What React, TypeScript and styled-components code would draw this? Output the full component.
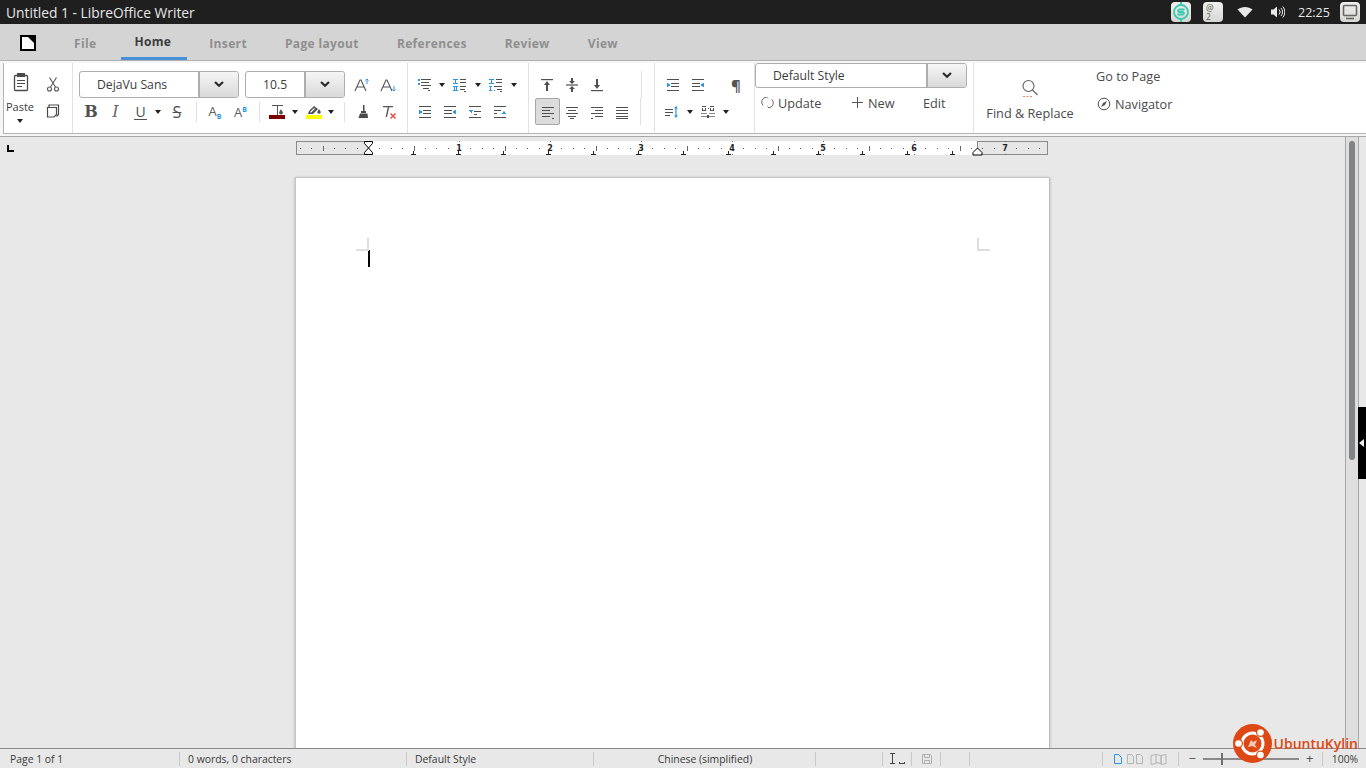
import React from 'react';
import styled, { createGlobalStyle } from 'styled-components';

const GlobalStyle = createGlobalStyle`
  html, body, #root {
    margin: 0;
    padding: 0;
    height: 100%;
    overflow: hidden;
  }
  body {
    font-family: "Open Sans", "Noto Sans", "Liberation Sans", sans-serif;
  }
`;

const Window = styled.div`
  width: 1366px;
  height: 768px;
  display: flex;
  flex-direction: column;
  position: relative;
  overflow: hidden;
  background: #e8e8e8;
`;

/* top panel */
const TitleBar = styled.div`
  height: 24px;
  flex: none;
  background: #1f1f1f;
  display: flex;
  align-items: center;
  padding: 0 6px;
`;

const TitleText = styled.div`
  flex: 1;
  color: #e6e6e6;
  font-size: 13.8px;
`;

const Tile = styled.div<{ $ml: number }>`
  width: 20px;
  height: 20px;
  margin-left: ${(p) => p.$ml}px;
  border-radius: 4px;
  background: linear-gradient(#f0f0ee, #d6d6d2);
  display: flex;
  align-items: center;
  justify-content: center;
`;

const TrayIcon = styled.div<{ $ml: number }>`
  margin-left: ${(p) => p.$ml}px;
  display: flex;
  align-items: center;
`;

const Clock = styled.div`
  color: #e8e8e8;
  font-size: 12.5px;
  width: 31px;
  margin-left: 13px;
`;

/* tabs */
const TabBar = styled.div`
  height: 36px;
  flex: none;
  background: #d4d4d4;
  display: flex;
  align-items: stretch;
  padding-left: 20px;
  box-sizing: border-box;
`;

const LogoSlot = styled.div`
  width: 35px;
  display: flex;
  align-items: center;
  padding-top: 2px;
`;

const Tab = styled.div<{ $active?: boolean }>`
  position: relative;
  padding: 0 19px;
  display: flex;
  align-items: center;
  padding-top: ${(p) => (p.$active ? 0 : 2)}px;
  padding-bottom: ${(p) => (p.$active ? 1 : 0)}px;
  font-size: 12px;
  font-weight: 700;
  letter-spacing: 0.35px;
  color: ${(p) => (p.$active ? '#3c3c3c' : '#8f8f8f')};

  ${(p) =>
    p.$active &&
    `&::after {
      content: '';
      position: absolute;
      left: 6px;
      right: 3px;
      bottom: 0;
      height: 3px;
      background: #4a90d9;
    }`}
`;

/* ribbon */
const RibbonFrame = styled.div`
  height: 77px;
  flex: none;
  box-sizing: border-box;
  background: #f6f6f6;
  border-top: 1px solid #b2b2b2;
  border-bottom: 1px solid #a8a8a8;
  padding: 2px 0 2px 3px;
`;

const Ribbon = styled.div`
  height: 71px;
  box-sizing: border-box;
  background: #fff;
  border-left: 1px solid #b4b4b4;
  border-bottom: 1px solid #b4b4b4;
  display: flex;
`;

const Group = styled.div<{ $w: number; $pad?: number; $flush?: boolean }>`
  width: ${(p) => p.$w}px;
  flex: none;
  box-sizing: border-box;
  padding-top: ${(p) => (p.$flush ? 0 : 8)}px;
  padding-left: ${(p) => p.$pad ?? 0}px;
  border-right: 1px solid #e2e2e2;
`;

const Row = styled.div`
  height: 27px;
  display: flex;
  align-items: center;
`;

const Tool = styled.div<{ $w: number; $active?: boolean; $lift?: number }>`
  width: ${(p) => p.$w}px;
  height: 27px;
  flex: none;
  display: flex;
  align-items: center;
  justify-content: center;
  box-sizing: border-box;
  border-radius: 2px;
  padding-bottom: ${(p) => p.$lift ?? 0}px;
  ${(p) => p.$active && 'background: #dcdcdc; border: 1px solid #a6a6a6;'}
`;

const Sep = styled.div<{ $w: number; $tall?: boolean }>`
  width: ${(p) => p.$w}px;
  height: ${(p) => (p.$tall ? 27 : 20)}px;
  flex: none;
  display: flex;
  justify-content: center;

  &::before {
    content: '';
    width: 1px;
    background: #e0e0e0;
  }
`;

const Caret = styled.span`
  width: 0;
  height: 0;
  border-left: 3.5px solid transparent;
  border-right: 3.5px solid transparent;
  border-top: 4px solid #222;
`;

const ClipGroup = styled(Group)`
  display: grid;
  grid-template-columns: 34px 30px;
  grid-template-rows: 27px 40px;
`;

const PasteLabel = styled.div`
  display: flex;
  flex-direction: column;
  align-items: center;
  gap: 5px;
  padding-top: 1px;
  font-size: 11px;
  color: #3c3c3c;
  margin-left: -2px;
`;

const ComboWrap = styled.div<{ $w: number; $text: number; $indent: number; $h?: number }>`
  width: ${(p) => p.$w}px;
  height: ${(p) => p.$h ?? 27}px;
  flex: none;
  box-sizing: border-box;
  border: 1px solid #aeaeae;
  border-radius: 3px;
  display: grid;
  grid-template-columns: ${(p) => p.$text}px 1fr;
  font-size: 12.2px;
  color: #3c3c3c;
  background: #fff;
  overflow: hidden;

  span:first-child {
    padding-left: ${(p) => p.$indent}px;
    display: flex;
    align-items: center;
  }
`;

const ComboButton = styled.div`
  background: linear-gradient(#f6f6f6, #d9d9d9);
  border-left: 2px solid #aeaeae;
  display: flex;
  align-items: center;
  justify-content: center;
`;

const ActionRow = styled.div`
  height: 29px;
  display: flex;
  align-items: center;
  font-size: 12.7px;
  color: #4a4a4a;
  padding-left: 6px;
`;

const Action = styled.div<{ $w: number }>`
  width: ${(p) => p.$w}px;
  flex: none;
  display: flex;
  align-items: center;
  gap: 4px;
`;

const FindGroup = styled.div`
  display: flex;
  font-size: 12.7px;
  color: #4a4a4a;
`;

const FindButton = styled.div`
  width: 112px;
  display: flex;
  flex-direction: column;
  align-items: center;
  padding-top: 16px;
  gap: 6px;
  margin-right: 10px;
`;

const NavColumn = styled.div`
  display: flex;
  flex-direction: column;
  padding-top: 4px;
  gap: 11px;
`;

const NavItem = styled.div`
  height: 17px;
  display: flex;
  align-items: center;
  gap: 4px;
`;

const NavIconSlot = styled.div`
  padding-left: 1px;
  display: flex;
`;

/* workspace */
const Workspace = styled.div`
  flex: 1;
  min-height: 0;
  display: flex;
  overflow: hidden;
`;

const DocArea = styled.div`
  width: 1345px;
  flex: none;
  overflow: hidden;
`;

const RulerRow = styled.div`
  height: 40px;
  padding-top: 4px;
  box-sizing: border-box;
  display: flex;
  padding-left: 7px;
`;

const CornerSlot = styled.div`
  width: 289px;
  display: flex;
  align-items: flex-start;
  padding-top: 4px;
`;

const Page = styled.div`
  width: 755px;
  height: 700px;
  margin-left: 295px;
  box-sizing: border-box;
  background: #fff;
  border: 1px solid #c6c6c6;
  border-right-color: #bdbdbd;
  box-shadow: -1px 0 2px #c8c8c8, 1px 1px 2px #cfcfcf;
  padding: 60px 59px 0 60px;
`;

const MarksRow = styled.div`
  display: flex;
  justify-content: space-between;
`;

const CropMark = styled.div<{ $side: 'left' | 'right' }>`
  width: 13px;
  height: 13px;
  box-sizing: border-box;
  border-bottom: 2px solid #dfdfdf;
  ${(p) => `border-${p.$side === 'left' ? 'right' : 'left'}: 2px solid #dfdfdf;`}
`;

const Cursor = styled.div`
  width: 2px;
  height: 17px;
  margin-left: 12px;
  margin-top: -1px;
  background: #000;
`;

const ScrollTrack = styled.div`
  width: 13px;
  flex: none;
  box-sizing: border-box;
  background: #dedede;
  border-left: 1px solid #a8a8a8;
  padding: 4px 3px 0 3px;
`;

const ScrollThumb = styled.div`
  width: 6px;
  height: 319px;
  border-radius: 3px;
  background: #7f8585;
`;

const SideEdge = styled.div`
  flex: 1;
  box-sizing: border-box;
  border-left: 1px solid #a8a8a8;
  display: flex;
  align-items: center;
`;

const SideHandle = styled.div`
  width: 8px;
  height: 72px;
  margin-left: -1px;
  flex: none;
  background: #000;
  display: flex;
  align-items: center;
  padding-left: 1px;
  box-sizing: border-box;

  &::before {
    content: '';
    border-top: 4px solid transparent;
    border-bottom: 4px solid transparent;
    border-right: 5px solid #eee;
  }
`;

/* status bar */
const StatusBar = styled.div`
  height: 20px;
  flex: none;
  box-sizing: border-box;
  border-top: 1px solid #8a8a8a;
  background: #e8e8e8;
  display: flex;
  font-size: 10.4px;
  color: #3a3a3a;
`;

const Cell = styled.div<{ $w: number; $center?: boolean; $pad?: number; $last?: boolean }>`
  width: ${(p) => p.$w}px;
  flex: none;
  box-sizing: border-box;
  display: flex;
  align-items: center;
  justify-content: ${(p) => (p.$center ? 'center' : 'flex-start')};
  padding-left: ${(p) => p.$pad ?? 0}px;
  position: relative;

  ${(p) =>
    !p.$last &&
    `&::after {
      content: '';
      position: absolute;
      right: 0;
      top: 3px;
      bottom: 2px;
      width: 1px;
      background: #c8c8c8;
    }`}
`;

const ZoomTrack = styled.div`
  width: 96px;
  height: 2px;
  margin: 0 7px;
  background: #8a8a8a;
  position: relative;

  &::before {
    content: '';
    position: absolute;
    left: 18px;
    top: -5px;
    width: 2px;
    height: 12px;
    background: #707070;
  }
`;

const ZoomSign = styled.span`
  font-size: 13px;
  color: #555;
  line-height: 1;
`;

const Brand = styled.div`
  position: absolute;
  right: 8px;
  bottom: 5px;
  display: flex;
  align-items: center;
  gap: 2px;
  color: #dd4814;
  font-size: 14px;
  font-weight: 600;
`;

const Pilcrow = styled.span`
  font-size: 15px;
  font-weight: 700;
  color: #555;
`;

const GRAY = '#505050';
const BLUE = '#2a96e8';

type Bar = [number, number, number, number, string?];

// small toolbar icons built from solid strips
const Bars = ({ d, w = 16, h = 16 }: { d: Bar[]; w?: number; h?: number }) => (
  <svg width={w} height={h} viewBox={`0 0 ${w} ${h}`}>
    {d.map(([x, y, bw, bh, c], i) => (
      <rect key={i} x={x} y={y} width={bw} height={bh} fill={c ?? GRAY} />
    ))}
  </svg>
);

const ListBullet = () => (
  <Bars d={[[2, 2, 2, 2, BLUE], [5, 2, 10, 1], [5, 5, 8, 1], [2, 6, 2, 2, BLUE], [5, 8, 10, 1], [7, 11, 6, 1], [12, 13, 2, 1]]} />
);
const ListNumber = () => (
  <Bars d={[[1, 2, 5, 1, BLUE], [3, 3, 1, 3, BLUE], [1, 6, 5, 1, BLUE], [8, 2, 6, 1], [8, 5, 6, 1], [1, 9, 5, 1, BLUE], [2, 10, 1, 3, BLUE], [4, 10, 1, 3, BLUE], [1, 13, 5, 1, BLUE], [8, 9, 6, 1], [8, 12, 5, 1], [12, 14, 2, 1]]} />
);
const ListOutline = () => (
  <Bars d={[[1, 2, 5, 1, BLUE], [3, 3, 1, 3, BLUE], [1, 6, 5, 1, BLUE], [8, 2, 6, 1], [8, 5, 6, 1], [1, 9, 3, 1, BLUE], [2, 10, 1, 3, BLUE], [1, 13, 3, 1, BLUE], [6, 13, 1, 1, BLUE], [6, 9, 8, 1], [9, 12, 5, 1], [12, 14, 2, 1]]} />
);
const IndentLeft = () => (
  <Bars d={[[2, 2, 12, 1], [6, 6, 8, 1], [6, 9, 8, 1], [2, 13, 12, 1], [2, 6, 1, 4, BLUE], [3, 6.5, 1, 3, BLUE], [4, 7, 1, 2, BLUE]]} />
);
const IndentRight = () => (
  <Bars d={[[2, 2, 12, 1], [2, 6, 8, 1], [2, 9, 8, 1], [2, 13, 12, 1], [13, 6, 1, 4, BLUE], [12, 6.5, 1, 3, BLUE], [11, 7, 1, 2, BLUE]]} />
);
const SpaceDown = () => (
  <Bars d={[[2, 2, 12, 1], [2, 6, 4, 1, BLUE], [3, 7, 2, 1, BLUE], [4, 8, 1, 1, BLUE], [7, 7, 7, 1], [7, 10, 3, 1], [2, 13, 12, 1]]} />
);
const SpaceUp = () => (
  <Bars d={[[2, 2, 12, 1], [2, 6, 7, 1], [2, 9, 3, 1], [10, 9, 4, 1, BLUE], [11, 8, 2, 1, BLUE], [11.5, 7, 1, 1, BLUE], [2, 13, 12, 1]]} />
);
const AlignTop = () => (
  <svg width="16" height="16" viewBox="0 0 16 16" fill={GRAY}>
    <rect x="2" y="2" width="12" height="1.2" />
    <path d="M8 4l3 4H9v6H7V8H5z" />
  </svg>
);
const AlignMiddle = () => (
  <svg width="16" height="16" viewBox="0 0 16 16" fill={GRAY}>
    <rect x="2" y="7.4" width="12" height="1.2" />
    <path d="M7 1h2v3h2L8 7 5 4h2zM8 9l3 3H9v3H7v-3H5z" />
  </svg>
);
const AlignBottom = () => (
  <svg width="16" height="16" viewBox="0 0 16 16" fill={GRAY}>
    <rect x="2" y="13" width="12" height="1.2" />
    <path d="M7 2h2v6h2l-3 4-3-4h2z" />
  </svg>
);
const TextLeft = () => (
  <Bars d={[[2, 3, 12, 1], [2, 6, 8, 1], [2, 9, 12, 1], [2, 12, 8, 1], [12, 14, 2, 1]]} />
);
const TextCenter = () => (
  <Bars d={[[2, 3, 12, 1], [4, 6, 8, 1], [2, 9, 12, 1], [4, 12, 8, 1], [6, 14, 4, 1]]} />
);
const TextRight = () => (
  <Bars d={[[2, 3, 12, 1], [6, 6, 8, 1], [2, 9, 12, 1], [6, 12, 8, 1], [2, 14, 2, 1]]} />
);
const TextJustify = () => (
  <Bars d={[[2, 3, 12, 1], [2, 6, 12, 1], [2, 9, 12, 1], [2, 12, 12, 1], [2, 14, 12, 1]]} />
);
const LineSpacing = () => (
  <svg width="16" height="16" viewBox="0 0 16 16" fill={GRAY}>
    <path d="M1 5h8v1H1zM1 8h8v1H1zM1 11h5v1H1z" />
    <path d="M12 2l2 2.500h-1.400v7H14l-2 2.500-2-2.500h1.400v-7H10z" fill={BLUE} />
  </svg>
);
const ColumnsIcon = () => (
  <Bars d={[[2, 2, 4, 1], [2, 4, 1, 2], [5, 4, 1, 2], [2, 6, 4, 1], [8, 4, 1, 1], [10, 2, 4, 1], [10, 4, 1, 2], [13, 4, 1, 2], [10, 6, 4, 1], [1, 9, 6, 1, '#888'], [9, 9, 6, 1, '#888'], [1, 12, 6, 1, '#888'], [9, 12, 6, 1, '#888'], [7, 11, 1, 3], [8, 11, 1, 3]]} />
);
const PasteIcon = () => (
  <svg width="18" height="20" viewBox="0 0 18 20" fill="none" stroke="#4a4a4a">
    <rect x="2.500" y="3.500" width="13" height="15" rx="1" strokeWidth="1.300" />
    <rect x="5" y="1" width="8" height="4" fill="#4a4a4a" stroke="none" />
    <path d="M5 8.500h8M5 11.500h8M5 14.500h5" />
  </svg>
);
const CutIcon = () => (
  <svg width="14" height="16" viewBox="0 0 14 16" fill="none" stroke="#555" strokeWidth="1.100">
    <path d="M3.500 1.500L9.500 11M10.500 1.500L4.500 11" />
    <circle cx="3.500" cy="13" r="2" />
    <circle cx="10.500" cy="13" r="2" />
  </svg>
);
const CopyIcon = () => (
  <svg width="14" height="14" viewBox="0 0 14 14" fill="none" stroke="#4a4a4a" strokeWidth="1.200">
    <path d="M3 3V1h9.500v9.500l-2 2" />
    <path d="M1.500 3.500h9v7l-2.500 2.500H1.500z" fill="#fff" />
  </svg>
);
const Chevron = () => (
  <svg width="10" height="7" viewBox="0 0 10 7" fill="none" stroke="#2c2c2c" strokeWidth="2.200">
    <path d="M1 1l4 3.800L9 1" />
  </svg>
);
const GrowFont = ({ up }: { up: boolean }) => (
  <svg width="18" height="16" viewBox="0 0 18 16">
    <path d="M1 14L6 3h1l5 11M3 10h7" fill="none" stroke="#555" strokeWidth="1.100" />
    {up ? (
      <path d="M13 7V2M11.500 3.500L13 2l1.500 1.500" fill="none" stroke={BLUE} strokeWidth="1" />
    ) : (
      <path d="M14 9v5M12.500 12.500L14 14l1.500-1.500" fill="none" stroke={BLUE} strokeWidth="1" />
    )}
  </svg>
);
const LetterBold = styled.span`
  font-family: "DejaVu Serif", "Liberation Serif", serif;
  font-weight: 700;
  font-size: 16px;
  color: #505050;
`;
const LetterItalic = styled.span`
  font-family: "DejaVu Serif", "Liberation Serif", serif;
  font-style: italic;
  font-size: 16px;
  color: #666;
`;
const LetterU = styled.span`
  font-size: 14px;
  color: #505050;
  border-bottom: 1px solid #505050;
  line-height: 15px;
  padding: 0 1px;
`;
const LetterS = styled.span`
  font-size: 16px;
  color: #505050;
  text-decoration: line-through;
`;
const Script = styled.span`
  font-size: 13px;
  color: #606060;
`;
const ScriptSmall = styled.span<{ $up?: boolean }>`
  font-size: 7px;
  font-weight: 700;
  color: ${BLUE};
  vertical-align: ${(p) => (p.$up ? '5px' : '-3px')};
`;
const TextColorIcon = () => (
  <svg width="16" height="16" viewBox="0 0 16 16" fill="#555">
    <path d="M3 1h11v1H9v9H8V2H3z" />
    <path d="M12 5l2 3.500a2 2 0 0 1-4 0z" />
    <rect x="0" y="11" width="16" height="4" fill="#7d0000" />
  </svg>
);
const HighlightIcon = () => (
  <svg width="16" height="16" viewBox="0 0 16 16" fill="#505050">
    <path d="M2 10l1-3 5-5 4 3-5 5z" />
    <path d="M4 8l4-4 1 .8-4 4z" fill="#fff" />
    <path d="M13 5l1.800 3a1.800 1.800 0 0 1-3.600 0z" />
    <rect x="0" y="11" width="16" height="4" fill="#ffff00" />
  </svg>
);
const BrushIcon = () => (
  <svg width="14" height="16" viewBox="0 0 14 16" fill="#4a4a4a">
    <path d="M7 1h1.500v6H7z" />
    <path d="M5 7h5v2H5z" />
    <path d="M4 9.500h7.500l.5 4.500H2.500z" />
  </svg>
);
const ClearIcon = () => (
  <svg width="18" height="16" viewBox="0 0 18 16">
    <path d="M3 2h10v1.300H9.200L7 13H5.600L7.800 3.300H3z" fill="#555" />
    <path d="M10.500 9.500l5 5M15.500 9.500l-5 5" stroke="#e2574c" strokeWidth="1.600" />
  </svg>
);
const UpdateIcon = () => (
  <svg width="13" height="13" viewBox="0 0 13 13" fill="none" stroke="#666" strokeWidth="1">
    <path d="M2 9.500A5 5 0 0 1 5 1.200M11 3.500A5 5 0 0 1 8 11.800" />
    <path d="M5.500 1L7 2.500M8 12l-1.500-1.500" />
  </svg>
);
const PlusIcon = () => (
  <svg width="13" height="13" viewBox="0 0 13 13" stroke="#555">
    <path d="M6.500 1v11M1 6.500h11" />
  </svg>
);
const SearchIcon = () => (
  <svg width="18" height="19" viewBox="0 0 18 19" fill="none" stroke="#606060" strokeWidth="1.100">
    <circle cx="7.500" cy="7" r="5.500" />
    <path d="M11.500 11l5 5" />
    <path d="M2 17.500h9" stroke="#f2826a" strokeDasharray="2 1.500" />
  </svg>
);
const CompassIcon = () => (
  <svg width="14" height="14" viewBox="0 0 14 14" fill="none" stroke="#555">
    <circle cx="7" cy="7" r="5.800" />
    <path d="M10 4L8 8 4 10l2-4z" fill="#555" stroke="none" />
  </svg>
);
const AppLogo = () => (
  <svg width="16" height="16" viewBox="0 0 16 16">
    <rect width="16" height="16" fill="#000" />
    <path d="M2 2h6l6 6v6H2z" fill="#fff" />
  </svg>
);
const SyncLogo = () => (
  <svg width="18" height="20" viewBox="0 0 18 20" fill="none" stroke="#38cbb0" strokeWidth="1.800">
    <circle cx="9" cy="10" r="7" />
    <path d="M9 0v3M9 17v3" />
    <path d="M12.500 7.500H7a1.300 1.300 0 0 0 0 2.500h4a1.300 1.300 0 0 1 0 2.500H5.500" />
  </svg>
);
const MailBadge = styled.div`
  display: flex;
  flex-direction: column;
  width: 14px;
  font-size: 8.500px;
  line-height: 9px;
  color: #5a5a5a;
`;
const WifiIcon = () => (
  <svg width="16" height="12" viewBox="0 0 16 12">
    <path d="M8 11.500L0.500 3.500C4.500 0 11.500 0 15.500 3.500z" fill="#e8e8e8" />
  </svg>
);
const VolumeIcon = () => (
  <svg width="15" height="14" viewBox="0 0 15 14" fill="none" stroke="#e8e8e8">
    <path d="M1 4.500h2.500L7 1.500v11l-3.500-3H1z" fill="#e8e8e8" stroke="none" />
    <path d="M9 4.500a3.500 3.500 0 0 1 0 5M11 3a6 6 0 0 1 0 8M12.800 1.500a8.500 8.500 0 0 1 0 11" />
  </svg>
);
const MonitorIcon = () => (
  <svg width="16" height="16" viewBox="0 0 16 16" fill="none" stroke="#666" strokeWidth="1.600">
    <rect x="1.500" y="1.500" width="13" height="10" rx="1" />
    <path d="M4 14.500h8" />
  </svg>
);
const CornerIcon = () => (
  <svg width="7" height="7" viewBox="0 0 7 7">
    <path d="M0 0h2v5h5v2H0z" fill="#000" />
  </svg>
);

const PX_PER_INCH = 91;
const ORIGIN = 72; // first margin inside the ruler drawing

const Ruler = () => {
  const ticks: React.ReactNode[] = [];
  for (let i = -6; i <= 60; i++) {
    const x = Math.round(ORIGIN + (i * PX_PER_INCH) / 8);
    if (x < 4 || x > 748 || i === 0) continue;
    if (i % 8 === 0) {
      ticks.push(
        <text key={i} x={x} y={10} fontSize="8" fontWeight="700" textAnchor="middle" fontFamily="DejaVu Sans, sans-serif" fill="#222">
          {i / 8}
        </text>,
      );
      ticks.push(<rect key={`top${i}`} x={x} y={0} width={1} height={1} fill="#666" />);
      ticks.push(<rect key={`bot${i}`} x={x} y={13} width={1} height={1} fill="#666" />);
    } else if (i % 4 === 0) {
      ticks.push(<rect key={i} x={x} y={5} width={1} height={5} fill="#666" />);
    } else {
      ticks.push(<rect key={i} x={x} y={7} width={1} height={1} fill="#555" />);
    }
  }
  const stops: React.ReactNode[] = [];
  for (let i = 1; i <= 13; i++) {
    const x = Math.round(ORIGIN + (i * PX_PER_INCH) / 2 - i * 0.55);
    stops.push(<path key={i} d={`M${x + 0.5} 10v3M${x - 2} 13.500h5`} stroke="#222" fill="none" />);
  }
  return (
    <svg width="752" height="15" viewBox="0 0 752 15">
      <rect x="0" y="0" width="752" height="14" fill="#fff" />
      <rect x="0.500" y="0.500" width="72" height="13" fill="#e6e6e6" stroke="#8a8a8a" />
      <rect x="681.500" y="0.500" width="70" height="13" fill="#e6e6e6" stroke="#8a8a8a" />
      {ticks}
      {stops}
      <path d="M68.500 0.500h8v2L72.500 7l-4-4.500zM72.500 7l4 4.500v2h-8v-2z" fill="#fff" stroke="#000" />
      <path d="M681.500 7l4.500 4.500v2.500h-9v-2.500z" fill="#fff" stroke="#000" />
    </svg>
  );
};

const KylinLogo = () => (
  <svg width="39" height="39" viewBox="0 0 39 39">
    <circle cx="19.500" cy="19.500" r="19.500" fill="#dd4814" />
    <circle cx="19.500" cy="19.500" r="10.500" fill="none" stroke="#fff" strokeWidth="3" />
    <circle cx="27.500" cy="8.500" r="4.500" fill="#dd4814" />
    <circle cx="27.500" cy="31" r="4.500" fill="#dd4814" />
    <circle cx="5.500" cy="19.500" r="4.500" fill="#dd4814" />
    <circle cx="27.500" cy="8.500" r="3.300" fill="#fff" />
    <circle cx="27.500" cy="31" r="3.300" fill="#fff" />
    <circle cx="5.500" cy="19.500" r="3.300" fill="#fff" />
    <path d="M15 23l3-7 2 2 4-2-2 5 2 3-5-2z" fill="#f4c9b8" />
  </svg>
);

export default function App() {
  return (
    <Window>
      <GlobalStyle />
      <TitleBar>
        <TitleText>Untitled 1 - LibreOffice Writer</TitleText>
        <Tile $ml={0}>
          <SyncLogo />
        </Tile>
        <Tile $ml={12}>
          <MailBadge>
            <span>@</span>
            <span>2</span>
          </MailBadge>
        </Tile>
        <TrayIcon $ml={14}>
          <WifiIcon />
        </TrayIcon>
        <TrayIcon $ml={17}>
          <VolumeIcon />
        </TrayIcon>
        <Clock>22:25</Clock>
        <Tile $ml={11}>
          <MonitorIcon />
        </Tile>
      </TitleBar>

      <TabBar>
        <LogoSlot>
          <AppLogo />
        </LogoSlot>
        <Tab>File</Tab>
        <Tab $active>Home</Tab>
        <Tab>Insert</Tab>
        <Tab>Page layout</Tab>
        <Tab>References</Tab>
        <Tab>Review</Tab>
        <Tab>View</Tab>
      </TabBar>

      <RibbonFrame>
        <Ribbon>
          <ClipGroup $w={69}>
            <Tool $w={34} $lift={5}>
              <PasteIcon />
            </Tool>
            <Tool $w={30} $lift={2}>
              <CutIcon />
            </Tool>
            <PasteLabel>
              Paste
              <Caret />
            </PasteLabel>
            <Tool $w={30} $lift={2}>
              <CopyIcon />
            </Tool>
          </ClipGroup>

          <Group $w={335} $pad={6}>
            <Row>
              <ComboWrap $w={160} $text={118} $indent={17}>
                <span>DejaVu Sans</span>
                <ComboButton>
                  <Chevron />
                </ComboButton>
              </ComboWrap>
              <Tool $w={6} />
              <ComboWrap $w={100} $text={58} $indent={17}>
                <span>10.5</span>
                <ComboButton>
                  <Chevron />
                </ComboButton>
              </ComboWrap>
              <Tool $w={5} />
              <Tool $w={26}>
                <GrowFont up />
              </Tool>
              <Tool $w={26}>
                <GrowFont up={false} />
              </Tool>
            </Row>
            <Row>
              <Tool $w={24}><LetterBold>B</LetterBold></Tool>
              <Tool $w={25}><LetterItalic>I</LetterItalic></Tool>
              <Tool $w={25}><LetterU>U</LetterU></Tool>
              <Tool $w={10}><Caret /></Tool>
              <Tool $w={28}><LetterS>S</LetterS></Tool>
              <Sep $w={10} />
              <Tool $w={28}><Script>A<ScriptSmall>B</ScriptSmall></Script></Tool>
              <Tool $w={23}><Script>A<ScriptSmall $up>B</ScriptSmall></Script></Tool>
              <Sep $w={14} />
              <Tool $w={22}><TextColorIcon /></Tool>
              <Tool $w={14}><Caret /></Tool>
              <Tool $w={24}><HighlightIcon /></Tool>
              <Tool $w={10}><Caret /></Tool>
              <Sep $w={16} />
              <Tool $w={22}><BrushIcon /></Tool>
              <Tool $w={30}><ClearIcon /></Tool>
            </Row>
          </Group>

          <Group $w={121} $pad={4}>
            <Row>
              <Tool $w={24}><ListBullet /></Tool>
              <Tool $w={12}><Caret /></Tool>
              <Tool $w={24}><ListNumber /></Tool>
              <Tool $w={12}><Caret /></Tool>
              <Tool $w={24}><ListOutline /></Tool>
              <Tool $w={12}><Caret /></Tool>
            </Row>
            <Row>
              <Tool $w={25}><IndentLeft /></Tool>
              <Tool $w={25}><IndentRight /></Tool>
              <Tool $w={25}><SpaceDown /></Tool>
              <Tool $w={25}><SpaceUp /></Tool>
            </Row>
          </Group>

          <Group $w={126} $pad={6}>
            <Row>
              <Tool $w={24}><AlignTop /></Tool>
              <Tool $w={25}><AlignMiddle /></Tool>
              <Tool $w={25}><AlignBottom /></Tool>
              <Tool $w={26} />
              <Sep $w={12} $tall />
            </Row>
            <Row>
              <Tool $w={25} $active><TextLeft /></Tool>
              <Tool $w={24}><TextCenter /></Tool>
              <Tool $w={25}><TextRight /></Tool>
              <Tool $w={25}><TextJustify /></Tool>
              <Sep $w={13} $tall />
            </Row>
          </Group>

          <Group $w={100} $pad={5}>
            <Row>
              <Tool $w={25}><IndentLeft /></Tool>
              <Tool $w={26}><IndentRight /></Tool>
              <Tool $w={50}><Pilcrow>¶</Pilcrow></Tool>
            </Row>
            <Row>
              <Tool $w={24}><LineSpacing /></Tool>
              <Tool $w={12}><Caret /></Tool>
              <Tool $w={24}><ColumnsIcon /></Tool>
              <Tool $w={12}><Caret /></Tool>
            </Row>
          </Group>

          <Group $w={219} $flush>
            <ComboWrap $w={212} $text={170} $indent={17} $h={25}>
              <span>Default Style</span>
              <ComboButton>
                <Chevron />
              </ComboButton>
            </ComboWrap>
            <ActionRow>
              <Action $w={90}>
                <UpdateIcon />
                Update
              </Action>
              <Action $w={72}>
                <PlusIcon />
                New
              </Action>
              <Action $w={40}>Edit</Action>
            </ActionRow>
          </Group>

          <FindGroup>
            <FindButton>
              <SearchIcon />
              Find &amp; Replace
            </FindButton>
            <NavColumn>
              <NavItem>Go to Page</NavItem>
              <NavItem>
                <NavIconSlot>
                  <CompassIcon />
                </NavIconSlot>
                Navigator
              </NavItem>
            </NavColumn>
          </FindGroup>
        </Ribbon>
      </RibbonFrame>

      <Workspace>
        <DocArea>
          <RulerRow>
            <CornerSlot>
              <CornerIcon />
            </CornerSlot>
            <Ruler />
          </RulerRow>
          <Page>
            <MarksRow>
              <CropMark $side="left" />
              <CropMark $side="right" />
            </MarksRow>
            <Cursor />
          </Page>
        </DocArea>
        <ScrollTrack>
          <ScrollThumb />
        </ScrollTrack>
        <SideEdge>
          <SideHandle />
        </SideEdge>
      </Workspace>

      <StatusBar>
        <Cell $w={180} $pad={10}>Page 1 of 1</Cell>
        <Cell $w={227} $pad={8}>0 words, 0 characters</Cell>
        <Cell $w={187} $pad={8}>Default Style</Cell>
        <Cell $w={222} $center>Chinese (simplified)</Cell>
        <Cell $w={67} />
        <Cell $w={29} $center>
          <Bars w={18} h={14} d={[[1, 1, 5, 1, '#444'], [3, 2, 1, 9, '#444'], [1, 11, 5, 1, '#444'], [10, 10, 1, 2, '#444'], [10, 11, 6, 1, '#444'], [15, 10, 1, 2, '#444']]} />
        </Cell>
        <Cell $w={29} $center>
          <svg width="12" height="12" viewBox="0 0 12 12" fill="none" stroke="#b0b0b0">
            <path d="M1.500 1.500h8l1 1v8h-9zM3.500 1.500v3h5v-3M3.500 10.500v-3h5v3" />
          </svg>
        </Cell>
        <Cell $w={29} />
        <Cell $w={133} />
        <Cell $w={76} $center>
          <svg width="60" height="12" viewBox="0 0 60 12" fill="none">
            <path d="M3.500 1.500h4l3 3v6h-7z" stroke={BLUE} />
            <path d="M16.500 1.500h4l2 2v7h-6zM25.500 1.500h4l2 2v7h-6zM40 2.500l5-1v9l-5 1zM45 1.500l5 1v8l-5-1M50 2.500l5-1v9l-5 1z" stroke="#b4b4b4" />
          </svg>
        </Cell>
        <Cell $w={144} $center>
          <ZoomSign>−</ZoomSign>
          <ZoomTrack />
          <ZoomSign>+</ZoomSign>
        </Cell>
        <Cell $w={44} $center $last>100%</Cell>
      </StatusBar>

      <Brand>
        <KylinLogo />
        <span>UbuntuKylin</span>
      </Brand>
    </Window>
  );
}
